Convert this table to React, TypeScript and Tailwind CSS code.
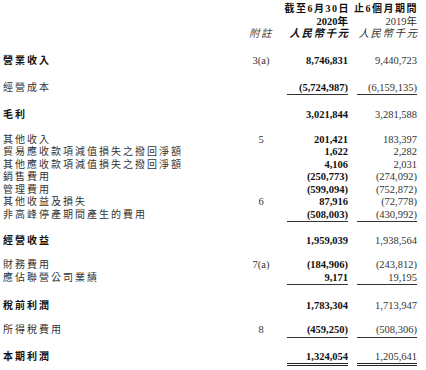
type Row = {
  label: string;
  note?: string;
  cur: string;
  prev: string;
  bold?: boolean;
  line?: 'single' | 'double';
};

const font = { fontFamily: '"Liberation Serif", "Noto Sans CJK TC", serif' };

const StatementRow = ({ row }: { row: Row }) => {
  const lineCls =
    row.line === 'single'
      ? 'border-b border-[#333]'
      : row.line === 'double'
        ? 'border-b-[3px] border-double border-[#222]'
        : '';
  return (
    <div className="flex items-start h-[12.5px] leading-[12.5px] whitespace-nowrap">
      <div
        className={`flex-1 pl-[3px] text-[10px] tracking-[2px] ${
          row.bold ? 'font-bold text-[#111]' : 'text-[#333]'
        }`}
      >
        {row.label}
      </div>
      <div className="w-[30px] text-center text-[10.5px] text-[#333]">{row.note}</div>
      <div className={`ml-[11px] w-[61px] text-right text-[10.5px] font-bold text-[#111] ${lineCls}`}>
        {row.cur}
      </div>
      <div className={`ml-[9px] w-[60px] text-right text-[10.5px] text-[#333] ${lineCls}`}>
        {row.prev}
      </div>
    </div>
  );
};

const Group = ({ rows, className }: { rows: Row[]; className: string }) => (
  <div className={className}>
    {rows.map((r) => (
      <StatementRow key={r.label} row={r} />
    ))}
  </div>
);

export default function App() {
  return (
    <div className="w-[426px] h-[370px] bg-white overflow-hidden pr-[9px]" style={font}>
      {/* header */}
      <div className="pt-[3px] flex justify-end whitespace-nowrap">
        <div className="flex flex-col">
          <div className="flex justify-end h-[12.5px] leading-[12.5px]">
            <div className="text-right text-[10px] font-bold tracking-[1.5px] text-[#111] -mr-[1px]">
              截至6月30日 止6個月期間
            </div>
          </div>
          <div className="flex h-[12.5px] leading-[12.5px] text-[10.5px]">
            <div className="w-[30px]" />
            <div className="ml-[11px] w-[61px] text-right font-bold text-[#111]">2020年</div>
            <div className="ml-[9px] w-[60px] text-right text-[#333]">2019年</div>
          </div>
          <div className="flex h-[12.5px] leading-[12.5px] text-[10.5px] italic">
            <div className="w-[30px] text-center text-[#444] tracking-[1.5px]">附註</div>
            <div className="ml-[11px] w-[61px] flex justify-end font-bold text-[#111] tracking-[1.5px]">
              <span className="-mr-[1.5px]">人民幣千元</span>
            </div>
            <div className="ml-[9px] w-[60px] flex justify-end text-[#333] tracking-[1.5px]">
              <span className="-mr-[1.5px]">人民幣千元</span>
            </div>
          </div>
        </div>
      </div>

      <Group
        className="mt-[14px]"
        rows={[{ label: '營業收入', note: '3(a)', cur: '8,746,831', prev: '9,440,723', bold: true }]}
      />
      <Group
        className="mt-[14.5px]"
        rows={[{ label: '經營成本', cur: '(5,724,987)', prev: '(6,159,135)', line: 'single' }]}
      />
      <Group
        className="mt-[14.5px]"
        rows={[{ label: '毛利', cur: '3,021,844', prev: '3,281,588', bold: true }]}
      />
      <Group
        className="mt-[12.5px]"
        rows={[
          { label: '其他收入', note: '5', cur: '201,421', prev: '183,397' },
          { label: '貿易應收款項減值損失之撥回淨額', cur: '1,622', prev: '2,282' },
          { label: '其他應收款項減值損失之撥回淨額', cur: '4,106', prev: '2,031' },
          { label: '銷售費用', cur: '(250,773)', prev: '(274,092)' },
          { label: '管理費用', cur: '(599,094)', prev: '(752,872)' },
          { label: '其他收益及損失', note: '6', cur: '87,916', prev: '(72,778)' },
          { label: '非高峰停產期間產生的費用', cur: '(508,003)', prev: '(430,992)', line: 'single' },
        ]}
      />
      <Group
        className="mt-[14px]"
        rows={[{ label: '經營收益', cur: '1,959,039', prev: '1,938,564', bold: true }]}
      />
      <Group
        className="mt-[11.5px]"
        rows={[
          { label: '財務費用', note: '7(a)', cur: '(184,906)', prev: '(243,812)' },
          { label: '應佔聯營公司業績', cur: '9,171', prev: '19,195', line: 'single' },
        ]}
      />
      <Group
        className="mt-[16px]"
        rows={[{ label: '稅前利潤', cur: '1,783,304', prev: '1,713,947', bold: true }]}
      />
      <Group
        className="mt-[11.5px]"
        rows={[{ label: '所得稅費用', note: '8', cur: '(459,250)', prev: '(508,306)', line: 'single' }]}
      />
      <Group
        className="mt-[14px]"
        rows={[{ label: '本期利潤', cur: '1,324,054', prev: '1,205,641', bold: true, line: 'double' }]}
      />
    </div>
  );
}
